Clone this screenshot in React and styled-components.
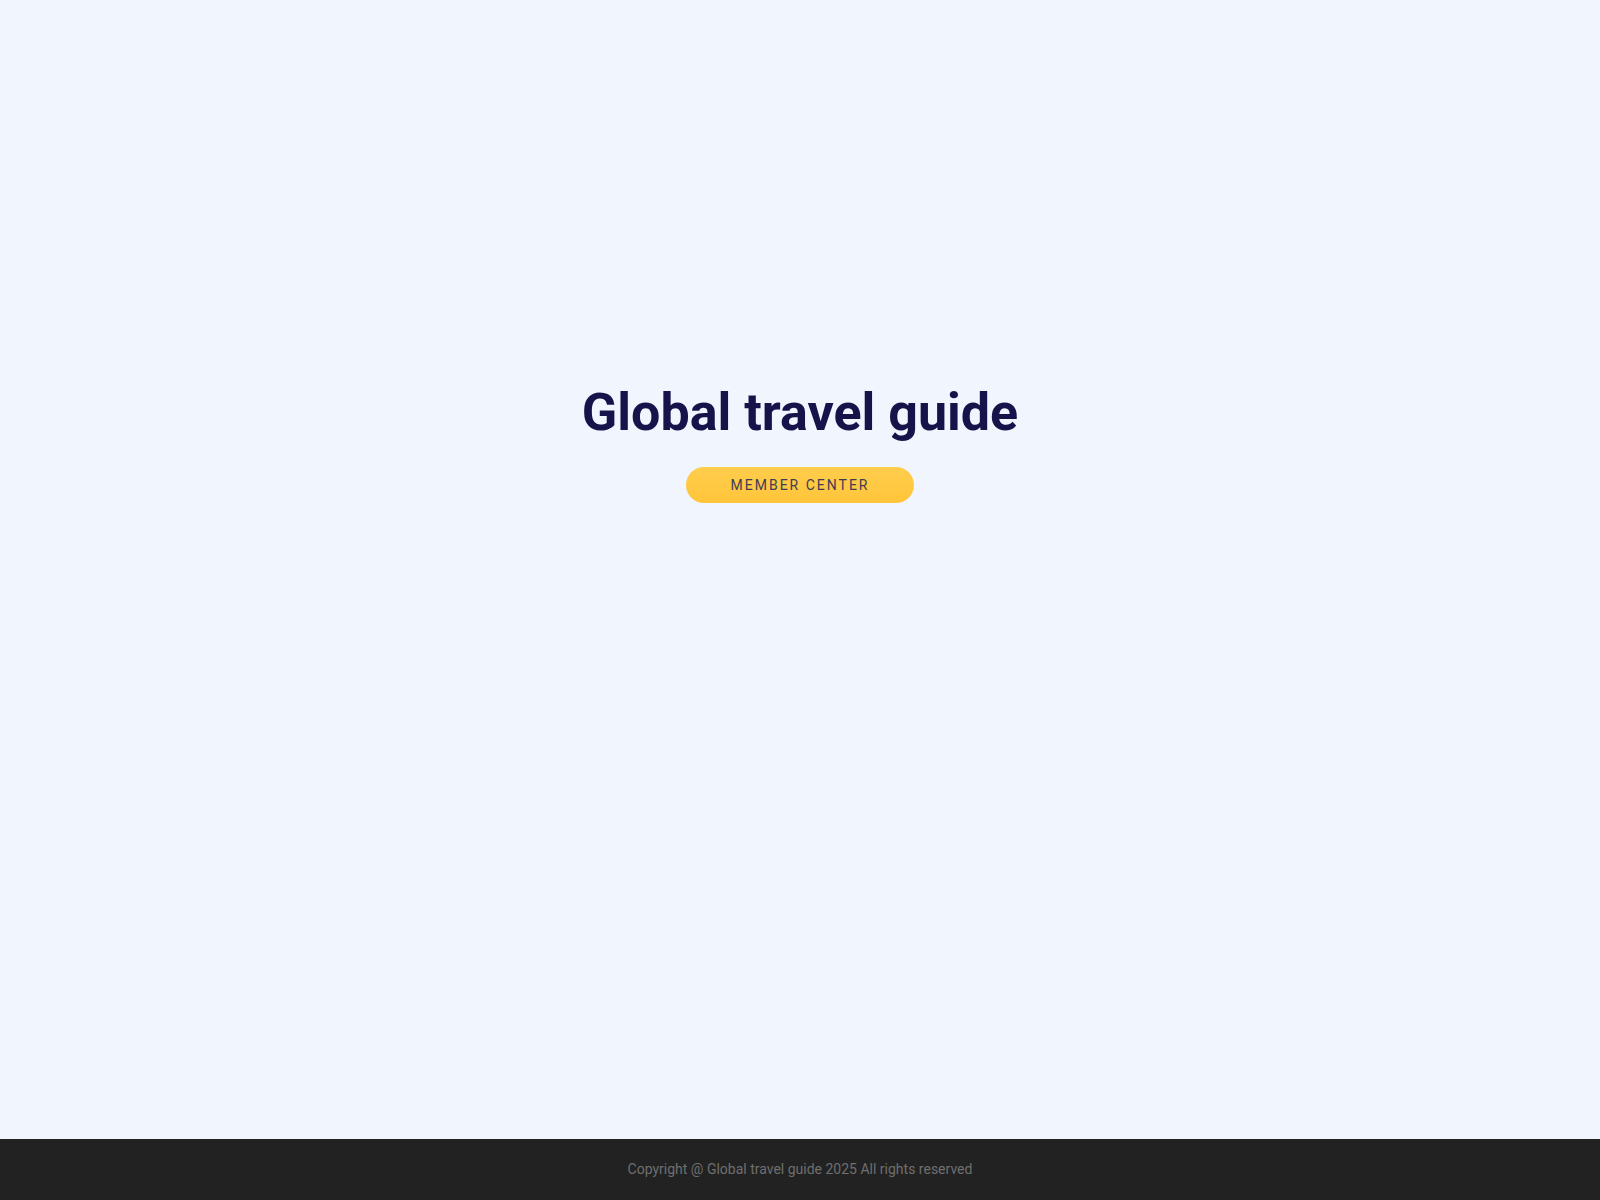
import React from "react";
import styled, { createGlobalStyle } from "styled-components";

const GlobalStyle = createGlobalStyle`
  html, body {
    margin: 0;
    padding: 0;
    background: #f0f5fe;
    font-family: Roboto, "Liberation Sans", sans-serif;
  }
  * {
    box-sizing: border-box;
  }
`;

export default () => {
  return (
    <Page>
      <GlobalStyle />
      <Hero>
        <Title>Global travel guide</Title>
        <MemberButton>MEMBER CENTER</MemberButton>
      </Hero>
      <Footer>Copyright @ Global travel guide 2025 All rights reserved</Footer>
    </Page>
  );
};

const Page = styled.div`
  min-height: 100vh;
  display: flex;
  flex-direction: column;
`;

const Hero = styled.main`
  flex: 1;
  display: flex;
  flex-direction: column;
  align-items: center;
  padding-top: 381px;
`;

const Title = styled.h1`
  margin: 0;
  font-size: 52px;
  font-weight: 700;
  line-height: 64px;
  color: #16134a;
`;

const MemberButton = styled.button`
  margin-top: 22px;
  width: 228px;
  height: 36px;
  border: none;
  border-radius: 18px;
  background: linear-gradient(180deg, #ffcd4c 0%, #ffc53a 100%);
  color: #3d3d55;
  font-family: Roboto, "Liberation Sans", sans-serif;
  font-size: 14px;
  letter-spacing: 2px;
  cursor: pointer;
`;

const Footer = styled.footer`
  height: 61px;
  padding-bottom: 2px;
  background: #222222;
  color: #6f6f6f;
  font-size: 14px;
  display: flex;
  align-items: center;
  justify-content: center;
`;
